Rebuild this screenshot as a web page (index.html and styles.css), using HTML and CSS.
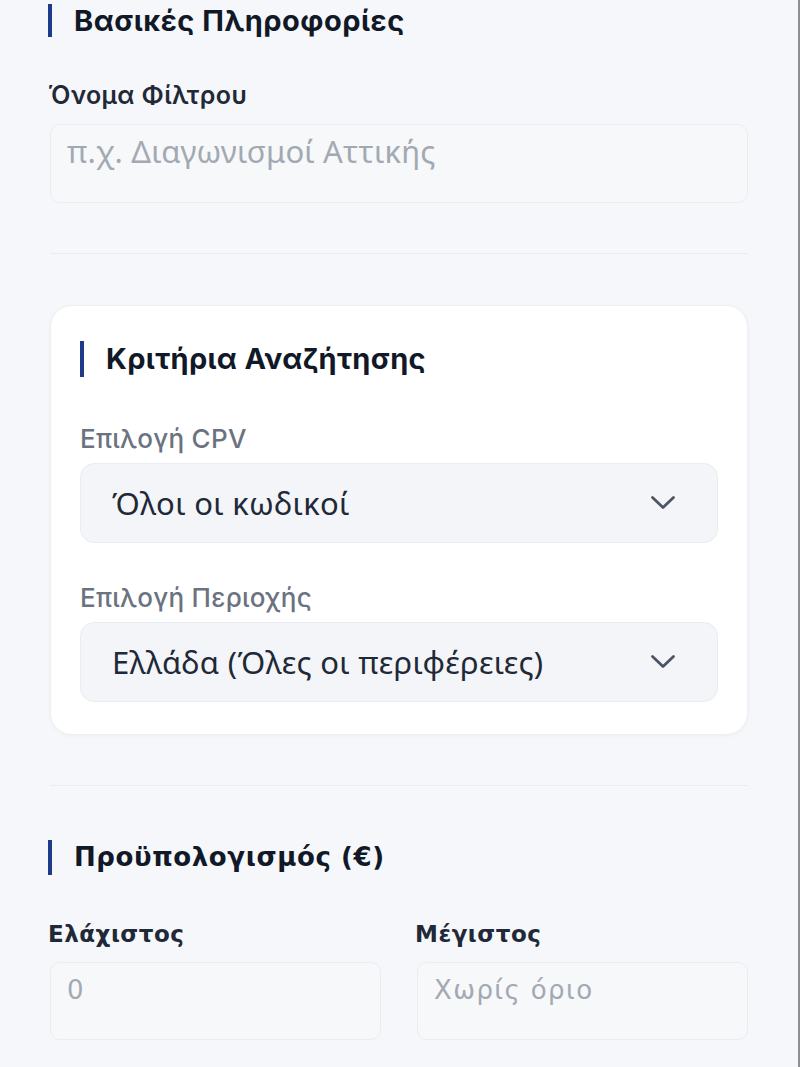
FILE: index.html
```html
<!DOCTYPE html>
<html lang="el">
<head>
<meta charset="utf-8">
<title>Φίλτρο</title>
<link rel="stylesheet" href="styles.css">
</head>
<body>
<main class="page">
  <section class="section basic">
    <h2 class="section-title">Βασικές Πληροφορίες</h2>
    <label class="label">Όνομα Φίλτρου</label>
    <div class="input"><span class="placeholder">π.χ. Διαγωνισμοί Αττικής</span></div>
  </section>

  <hr class="divider first">

  <section class="card">
    <h2 class="section-title">Κριτήρια Αναζήτησης</h2>
    <label class="label muted">Επιλογή CPV</label>
    <div class="select">
      <span class="select-value">Όλοι οι κωδικοί</span>
      <svg class="chevron" viewBox="0 0 26 16" width="26" height="16"><path d="M2.5 2.5L13 12.5L23.5 2.5" fill="none" stroke="#4b5563" stroke-width="2.8" stroke-linecap="round" stroke-linejoin="round"/></svg>
    </div>
    <label class="label muted second">Επιλογή Περιοχής</label>
    <div class="select">
      <span class="select-value">Ελλάδα (Όλες οι περιφέρειες)</span>
      <svg class="chevron" viewBox="0 0 26 16" width="26" height="16"><path d="M2.5 2.5L13 12.5L23.5 2.5" fill="none" stroke="#4b5563" stroke-width="2.8" stroke-linecap="round" stroke-linejoin="round"/></svg>
    </div>
  </section>

  <hr class="divider second-div">

  <section class="section budget">
    <h2 class="section-title">Προϋπολογισμός (€)</h2>
    <div class="budget-grid">
      <div class="field">
        <label class="label">Ελάχιστος</label>
        <div class="input"><span class="placeholder">0</span></div>
      </div>
      <div class="field">
        <label class="label">Μέγιστος</label>
        <div class="input"><span class="placeholder">Χωρίς όριο</span></div>
      </div>
    </div>
  </section>
</main>
</body>
</html>
```

FILE: styles.css
```css
html, body {
  margin: 0;
  padding: 0;
  height: 100%;
  overflow: hidden;
}
body {
  background: #f5f7fa;
  font-family: Inter, "Noto Sans", sans-serif;
  color: #111827;
  border-right: 2px solid #8c8f94;
  box-sizing: border-box;
}
.page {
  padding: 0 50px 0 48px;
}

/* section headings with accent bar */
.section-title {
  margin: 0;
  font-size: 29px;
  font-weight: 700;
  line-height: 33px;
  padding-left: 22px;
  border-left: 4px solid #1e3a8a;
  color: #111827;
  letter-spacing: 0.5px;
}
.basic {
  padding-top: 4px;
}
.label {
  display: block;
  font-size: 25px;
  font-weight: 600;
  line-height: 30px;
  color: #1f2937;
  letter-spacing: 0.4px;
}
.basic .label {
  margin: 43px 0 14px;
}
.input {
  height: 79px;
  background: #f6f8fa;
  border: 1px solid #eaedf1;
  border-radius: 10px;
  box-sizing: border-box;
  padding: 6px 16px;
}
.basic .input {
  margin-left: 2px;
}
.placeholder {
  display: block;
  font-family: "Noto Sans", sans-serif;
  font-size: 31px;
  line-height: 40px;
  color: #a3a9b3;
  letter-spacing: 0.2px;
}

.divider {
  border: 0;
  border-top: 1px solid #e8ebef;
  margin: 0 0 0 2px;
}
.divider.first {
  margin-top: 50px;
}

/* card */
.card {
  margin: 51px 0 0 2px;
  background: #ffffff;
  border-radius: 22px;
  border: 1px solid #eef0f3;
  box-shadow: 0 1px 4px rgba(15, 23, 42, 0.04);
  padding: 35px 29px 32px 29px;
}
.card .section-title {
  line-height: 36px;
  letter-spacing: 0.35px;
}
.label.muted {
  font-size: 26px;
  font-weight: 500;
  color: #6b7280;
  letter-spacing: 0.3px;
  margin: 47px 0 9px;
}
.label.muted.second {
  margin-top: 40px;
}
.select {
  height: 80px;
  background: #f3f5f8;
  border: 1px solid #e9ecf0;
  border-radius: 14px;
  box-sizing: border-box;
  display: flex;
  align-items: center;
  justify-content: space-between;
  padding: 0 41px 0 31px;
}
.select-value {
  font-family: "Noto Sans", sans-serif;
  font-size: 31px;
  color: #1f2937;
  line-height: 40px;
  letter-spacing: 0.3px;
}
.chevron {
  display: block;
  flex: none;
}

.divider.second-div {
  margin-top: 50px;
}

/* budget */
.budget {
  padding-top: 54px;
}
.budget .section-title {
  font-family: "DejaVu Sans", sans-serif;
  font-size: 26px;
  line-height: 35px;
  letter-spacing: 0.6px;
}
.budget .label {
  font-family: "DejaVu Sans", sans-serif;
  font-size: 23px;
  font-weight: 700;
  line-height: 28px;
  letter-spacing: 0.5px;
  color: #1f2937;
  margin: 0 0 14px;
}
.budget-grid {
  display: grid;
  grid-template-columns: 1fr 1fr;
  column-gap: 34px;
  margin-top: 45px;
}
.budget .input {
  height: 78px;
  margin-left: 2px;
  padding: 8px 16px;
}
.budget .placeholder {
  font-family: "DejaVu Sans", sans-serif;
  font-size: 26px;
  line-height: 38px;
  letter-spacing: 1.4px;
}
```
